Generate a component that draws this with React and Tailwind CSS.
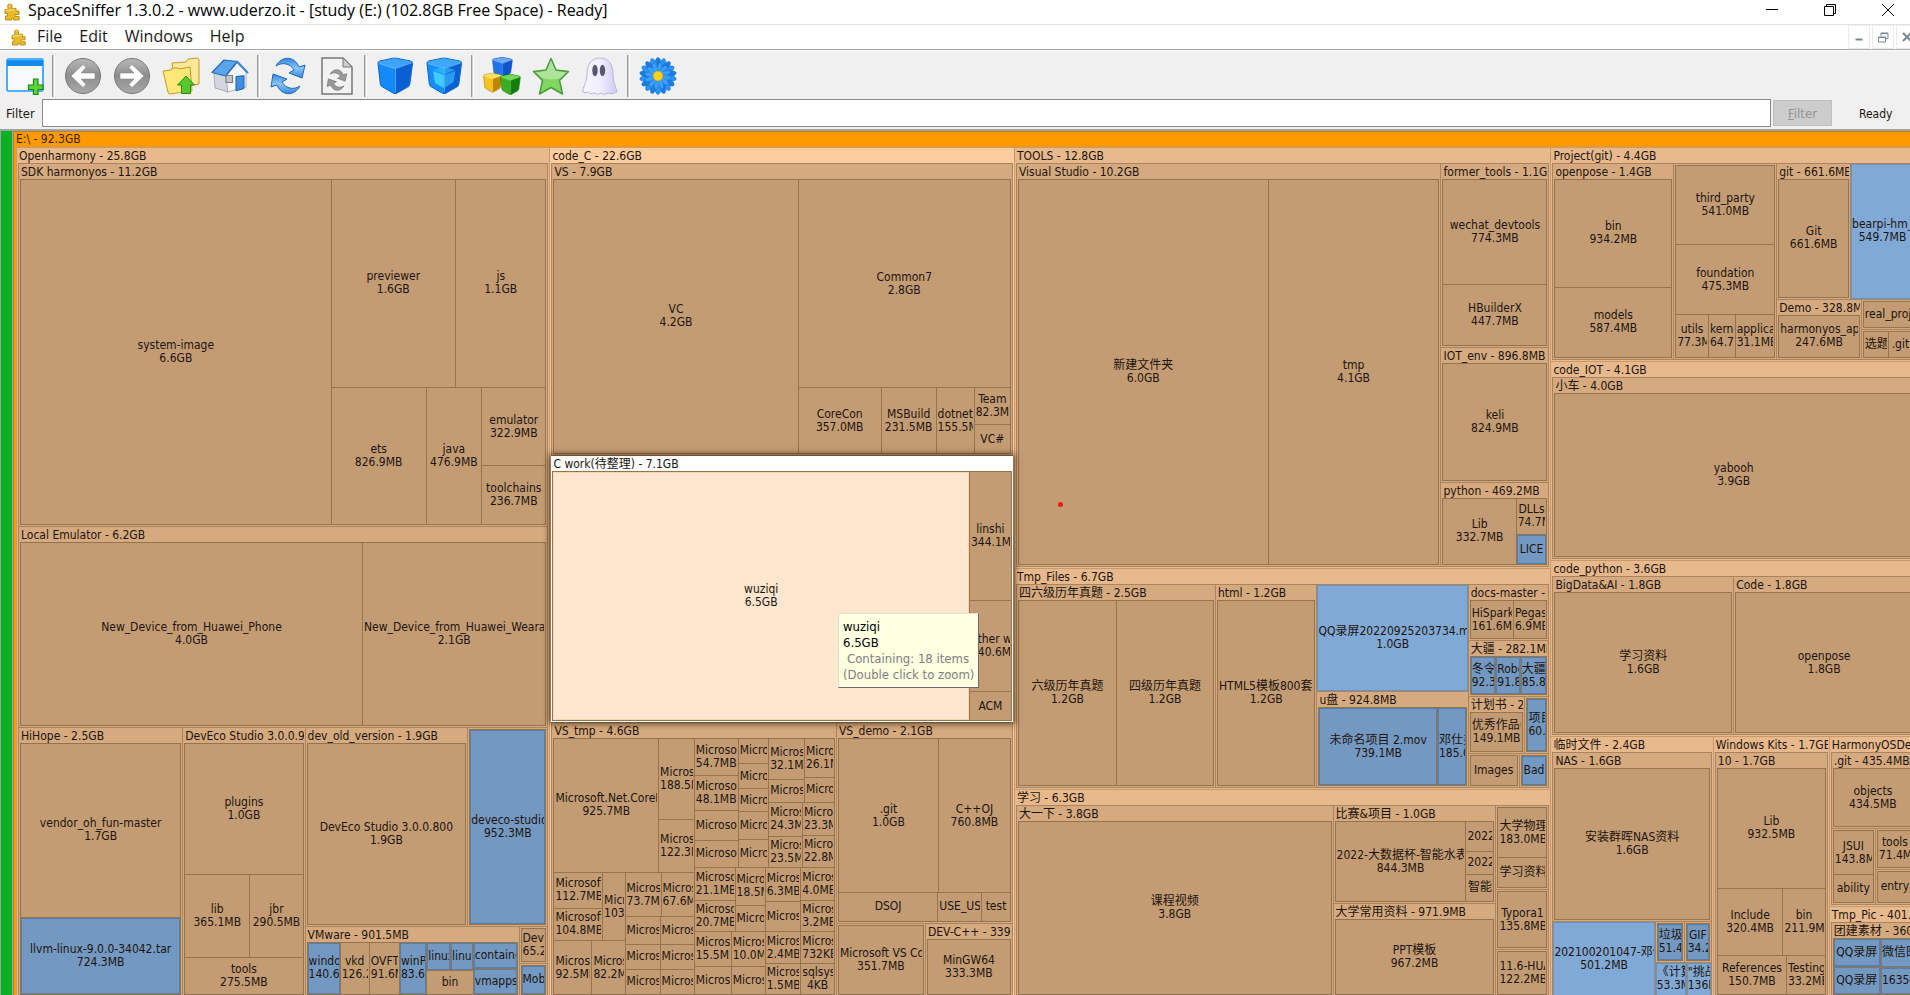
import React from "react";

// Treemap description. Every node carries its share of the parent's main axis.
const row = (w, ...kids) => ({ t: "row", w, kids });
const col = (w, ...kids) => ({ t: "col", w, kids });
const leaf = (w, name, size, tone = "tan") => ({ t: "leaf", w, name, size, tone });
const folder = (w, title, kid, look = "sub") => ({ t: "folder", w, title, kid, look });

const TONES = {
  tan: "bg-[#c49c74] border-transparent",
  blue: "bg-[#7399c3] border-[#587fa8]",
  sky: "bg-[#80a9d6] border-[#6a93c0]",
  hot: "bg-[#ffe6cf] border-[#ffd6b0]",
};

const LOOKS = {
  top: "bg-[#e8b98c]",
  lit: "bg-[#ffcc9f]",
  sub: "bg-[#d5aa7f]",
  focus: "relative z-10 -mx-px bg-white shadow-[0_0_6px_2px_rgba(60,35,10,0.75)]",
};

const BODIES = {
  top: "bg-[#a98460]",
  lit: "bg-[#a98460]",
  sub: "bg-[#94744f]",
  focus: "bg-[#94744f]",
};

const m = (w, name = "Microsof", size) => leaf(w, name, size);

const openharmony = folder(533, "Openharmony - 25.8GB",
  col(1,
    folder(363, "SDK harmonyos - 11.2GB",
      row(1,
        leaf(310, "system-image", "6.6GB"),
        col(214,
          row(208, leaf(124, "previewer", "1.6GB"), leaf(90, "js", "1.1GB")),
          row(137,
            leaf(95, "ets", "826.9MB"),
            leaf(55, "java", "476.9MB"),
            col(64, leaf(79, "emulator", "322.9MB"), leaf(58, "toolchains", "236.7MB")))))),
    folder(201, "Local Emulator - 6.2GB",
      row(1,
        leaf(342, "New_Device_from_Huawei_Phone", "4.0GB"),
        leaf(183, "New_Device_from_Huawei_Wearable", "2.1GB"))),
    row(269,
      folder(164, "HiHope - 2.5GB",
        col(1,
          leaf(173, "vendor_oh_fun-master", "1.7GB"),
          leaf(76, "llvm-linux-9.0.0-34042.tar", "724.3MB", "blue"))),
      folder(122, "DevEco Studio 3.0.0.993",
        col(1,
          leaf(132, "plugins", "1.0GB"),
          row(83, leaf(65, "lib", "365.1MB"), leaf(53, "jbr", "290.5MB")),
          leaf(36, "tools", "275.5MB"))),
      col(243,
        row(199,
          folder(163, "dev_old_version - 1.9GB", leaf(1, "DevEco Studio 3.0.0.800", "1.9GB")),
          folder(80, null, leaf(1, "deveco-studio", "952.3MB", "blue"))),
        row(70,
          folder(214, "VMware - 901.5MB",
            row(1,
              leaf(33, "windows", "140.6MB", "blue"),
              leaf(29, "vkd", "126.2MB"),
              leaf(30, "OVFT", "91.6MB"),
              leaf(27, "winPre", "83.6MB", "blue"),
              col(47,
                row(28, leaf(24, "linux", null, "blue"), leaf(23, "linux", null, "blue")),
                leaf(24, "bin")),
              col(44, leaf(26, "container", null, "blue"), leaf(26, "vmapps", null, "blue")))),
          col(28,
            folder(37, null, leaf(1, "DevE", "65.2M")),
            folder(33, null, leaf(1, "Mobi", null, "blue"))))))),
  "top");

const codeC = folder(464, "code_C - 22.6GB",
  col(1,
    folder(292, "VS - 7.9GB",
      row(1,
        leaf(244, "VC", "4.2GB"),
        col(212,
          leaf(209, "Common7", "2.8GB"),
          row(65,
            leaf(84, "CoreCon", "357.0MB"),
            leaf(55, "MSBuild", "231.5MB"),
            leaf(38, "dotnet", "155.5MB"),
            col(36, leaf(36, "Team", "82.3MB"), leaf(28, "VC#")))))),
    folder(267, "C work(待整理) - 7.1GB",
      row(1,
        leaf(415, "wuziqi", "6.5GB", "hot"),
        col(41, leaf(129, "linshi", "344.1MB"), leaf(90, "other w", "140.6MB"), leaf(28, "ACM"))),
      "focus"),
    row(274,
      folder(285, "VS_tmp - 4.6GB",
        row(1,
          col(140,
            row(134,
              leaf(105, "Microsoft.Net.CoreR", "925.7MB"),
              col(35, m(81, "Microso", "188.5MB"), m(53, "Microso", "122.3MB"))),
            row(122,
              col(71,
                row(69,
                  col(49, m(36, "Microsoft.", "112.7MB"), m(33, "Microsoft.", "104.8MB")),
                  m(22, "Micros", "103.0MB")),
                row(54, m(38, "Microso", "92.5MB"), m(33, "Microso", "82.2MB"))),
              col(69,
                row(45, m(36, "Microso", "73.7MB"), m(33, "Microso", "67.6MB")),
                row(27, m(35), m(34)),
                row(25, m(35), m(34)),
                row(25, m(35), m(34))))),
          col(140,
            row(129,
              col(44, m(37, "Microsof", "54.7MB"), m(35, "Microsof", "48.1MB"), m(30), m(27)),
              col(30, m(25), m(25), m(23), m(28), m(28)),
              col(66,
                row(64,
                  col(36, m(41, "Microso", "32.1MB"), m(23)),
                  col(30, m(39, "Microso", "26.1MB"), m(25))),
                row(65,
                  col(34, m(34, "Microso", "24.3MB"), m(31, "Microso", "23.5MB")),
                  col(32, m(33, "Microso", "23.3MB"), m(32, "Microso", "22.8MB"))))),
            row(127,
              col(71,
                row(64,
                  col(41, m(33, "Microsof", "21.1MB"), m(31, "Microsof", "20.7MB")),
                  col(30, m(38, "Microso", "18.5MB"), m(27))),
                row(62,
                  col(37, m(34, "Microso", "15.5MB"), m(28)),
                  col(34, m(34, "Microso", "10.0MB"), m(28)))),
              col(35, m(34, "Microso", "6.3MB"), m(30), m(31, "Microso", "2.4MB"), m(31, "Microso", "1.5MB")),
              col(33, m(33, "Microso", "4.0MB"), m(31, "Microso", "3.2MB"), m(31, "Microso", "732KB"), m(31, "sqlsysc", "4KB")))))),
      col(176,
        folder(202, "VS_demo - 2.1GB",
          col(1,
            row(155, leaf(99, ".git", "1.0GB"), leaf(71, "C++OJ", "760.8MB")),
            row(28, leaf(99, "DSOJ"), leaf(43, "USE_US"), leaf(28, "test")))),
        row(73,
          folder(89, null, leaf(1, "Microsoft VS Code", "351.7MB")),
          folder(87, "DEV-C++ - 339.1MB", leaf(1, "MinGW64", "333.3MB")))))),
  "lit");

const thirdColumn = col(536,
  folder(421, "TOOLS - 12.8GB",
    row(1,
      folder(424, "Visual Studio - 10.2GB",
        row(1, leaf(249, "新建文件夹", "6.0GB"), leaf(170, "tmp", "4.1GB"))),
      col(107,
        folder(184, "former_tools - 1.1GB",
          col(1, leaf(105, "wechat_devtools", "774.3MB"), leaf(60, "HBuilderX", "447.7MB"))),
        folder(135, "IOT_env - 896.8MB", leaf(1, "keli", "824.9MB")),
        folder(84, "python - 469.2MB",
          row(1,
            leaf(73, "Lib", "332.7MB"),
            col(30, leaf(36, "DLLs", "74.7MB"), leaf(29, "LICE", null, "blue")))))), "top"),
  folder(221, "Tmp_Files - 6.7GB",
    row(1,
      folder(199, "四六级历年真题 - 2.5GB",
        row(1, leaf(98, "六级历年真题", "1.2GB"), leaf(97, "四级历年真题", "1.2GB"))),
      folder(101, "html - 1.2GB", leaf(1, "HTML5模板800套-", "1.2GB")),
      col(151,
        leaf(107, "QQ录屏20220925203734.mp4", "1.0GB", "sky"),
        folder(96, "u盘 - 924.8MB",
          row(1, leaf(118, "未命名项目 2.mov", "739.1MB", "blue"), leaf(28, "邓仕尧", "185.0MB", "blue")))),
      col(80,
        folder(56, "docs-master - 282.3MB",
          row(1, leaf(43, "HiSpark", "161.6MB"), leaf(33, "Pegasus", "6.9MB"))),
        folder(56, "大疆 - 282.1MB",
          row(1,
            leaf(25, "冬令", "92.3MB", "blue"),
            leaf(24, "Robo", "91.8MB", "blue"),
            leaf(26, "大疆", "85.8MB", "blue"))),
        row(57,
          folder(56, "计划书 - 209MB", leaf(1, "优秀作品(", "149.1MB")),
          folder(23, null, leaf(1, "项目", "60.1MB", "blue"))),
        row(34,
          folder(50, null, leaf(1, "Images")),
          folder(29, null, leaf(1, "Bad", null, "blue"))))), "top"),
  folder(208, "学习 - 6.3GB",
    row(1,
      folder(316, "大一下 - 3.8GB", leaf(1, "课程视频", "3.8GB")),
      col(162,
        folder(97, "比赛&项目 - 1.0GB",
          row(1,
            leaf(130, "2022-大数据杯-智能水表", "844.3MB"),
            col(27, leaf(29, "2022"), leaf(22, "2022"), leaf(27, "智能")))),
        folder(92, "大学常用资料 - 971.9MB", leaf(1, "PPT模板", "967.2MB"))),
      col(52,
        folder(83, null, col(1, leaf(50, "大学物理", "183.0MB"), leaf(29, "学习资料"))),
        folder(60, null, leaf(1, "Typora1", "135.8MB")),
        folder(46, null, leaf(1, "11.6-HUA", "122.2MB")))), "top"));

const fourthColumn = col(365,
  folder(214, "Project(git) - 4.4GB",
    row(1,
      folder(121, "openpose - 1.4GB",
        col(1, leaf(108, "bin", "934.2MB"), leaf(70, "models", "587.4MB"))),
      folder(103, null,
        col(1,
          leaf(80, "third_party", "541.0MB"),
          leaf(70, "foundation", "475.3MB"),
          row(43,
            leaf(32, "utils", "77.3MB"),
            leaf(26, "kernel", "64.7MB"),
            leaf(39, "applicati", "31.1MB")))),
      col(138,
        row(136,
          folder(74, "git - 661.6MB", leaf(1, "Git", "661.6MB")),
          leaf(64, "bearpi-hm_nano", "549.7MB", "sky")),
        row(60,
          folder(85, "Demo - 328.8MB", leaf(1, "harmonyos_app", "247.6MB")),
          col(53,
            folder(30, null, leaf(1, "real_proje")),
            folder(30, null, row(1, leaf(25, "选题"), leaf(24, ".git"))))))), "top"),
  folder(199, "code_IOT - 4.1GB",
    folder(1, "小车 - 4.0GB", leaf(1, "yabooh", "3.9GB")), "top"),
  folder(176, "code_python - 3.6GB",
    row(1,
      folder(181, "BigData&AI - 1.8GB", leaf(1, "学习资料", "1.6GB")),
      folder(181, "Code - 1.8GB", leaf(1, "openpose", "1.8GB"))), "top"),
  row(262,
    folder(163, "临时文件 - 2.4GB",
      col(1,
        folder(169, "NAS - 1.6GB", leaf(1, "安装群晖NAS资料", "1.6GB")),
        row(75,
          leaf(103, "202100201047-邓仕尧", "501.2MB", "sky"),
          col(56,
            row(41,
              folder(29, null, leaf(1, "垃圾", "51.4MB", "blue")),
              folder(27, null, leaf(1, "GIF", "34.2MB", "blue"))),
            row(34,
              leaf(31, "《计算", "53.3MB", "sky"),
              leaf(25, "\"挑战", "136KB", "sky"))))), "top"),
    folder(116, "Windows Kits - 1.7GB",
      folder(1, "10 - 1.7GB",
        col(1,
          leaf(119, "Lib", "932.5MB"),
          row(67, leaf(64, "Include", "320.4MB"), leaf(41, "bin", "211.9MB")),
          row(38, leaf(67, "References", "150.7MB"), leaf(37, "Testing", "33.2MB")))), "top"),
    col(87,
      folder(170, "HarmonyOSDev - 700MB",
        col(1,
          folder(76, ".git - 435.4MB", leaf(1, "objects", "434.5MB")),
          row(75,
            folder(44, null, col(1, leaf(44, "JSUI", "143.8MB"), leaf(27, "ability"))),
            col(39,
              folder(40, null, leaf(1, "tools", "71.4MB")),
              folder(35, null, leaf(1, "entry"))))), "top"),
      folder(92, "Tmp_Pic - 401.2MB",
        folder(1, "团建素材 - 360.8MB",
          row(1,
            col(46, leaf(27, "QQ录屏", null, "blue"), leaf(27, "QQ录屏", null, "blue")),
            col(31, leaf(28, "微信图", null, "blue"), leaf(26, "163507", null, "blue")))), "top"))));

const DRIVE = row(1, openharmony, codeC, thirdColumn, fourthColumn);

function Tile({ node }) {
  if (node.t === "leaf") {
    return (
      <div className={`flex min-h-0 min-w-0 flex-col justify-center border ${TONES[node.tone]}`}>
        <div className="overflow-x-clip text-center whitespace-nowrap">
          <div>{node.name}</div>
          {node.size && <div>{node.size}</div>}
        </div>
      </div>
    );
  }
  if (node.t === "folder") {
    return (
      <div className={`flex min-h-0 min-w-0 flex-col p-px ${LOOKS[node.look]}`}>
        {node.title && (
          <div className="h-[14px] shrink-0 overflow-x-clip pl-px leading-[15px] whitespace-nowrap">{node.title}</div>
        )}
        <div className={`grid min-h-0 flex-1 grid-cols-1 grid-rows-1 p-px ${BODIES[node.look]}`}>
          <Tile node={node.kid} />
        </div>
      </div>
    );
  }
  const tracks = node.kids.map((kid) => `minmax(0, ${kid.w}fr)`).join(" ");
  const isColumn = node.t === "col";
  return (
    <div
      style={isColumn ? { gridTemplateRows: tracks } : { gridTemplateColumns: tracks }}
      className={`grid min-h-0 min-w-0 gap-px ${isColumn ? "grid-cols-1" : "grid-rows-1"}`}
    >
      {node.kids.map((kid, i) => <Tile key={i} node={kid} />)}
    </div>
  );
}

const Icon = ({ children, className = "size-[38px]" }) => (
  <svg viewBox="0 0 38 38" className={className} aria-hidden="true">{children}</svg>
);

const Puzzle = ({ className }) => (
  <svg viewBox="0 0 16 18" className={className} aria-hidden="true">
    <path d="M4 5Q2.800 1 6 1 9 1 8 4.500L7.600 6 12 5.200V8H15V11.500H11V13.500H15.200V17H9.500V15.200H7.500V17H1.500V13H3.500V10.500H1V6.800L4.300 6.500z" fill="#e8bb2a" stroke="#b58a14" strokeWidth=".9" strokeLinejoin="round" />
    <path d="M5.200 2.800Q6 1.800 7 2.300M2 7.600L11 6.800" stroke="#fbe78f" strokeWidth="1" fill="none" />
  </svg>
);

const SyncShape = ({ fill, stroke }) => (
  <g fill={fill} stroke={stroke} strokeWidth="1" strokeLinejoin="round">
    <path d="M7 9C12-1 25-2 30 10l6-2-3 13-13-5 5-3C21 6 13 5 7 9z" />
    <path d="M31 29C26 39 13 40 8 28l-6 2 2-13 14 5-5 3c4 7 12 8 18 4z" />
  </g>
);

const Cube = ({ x, y, s, top, left, right, line }) => (
  <g transform={`translate(${x} ${y}) scale(${s})`} strokeLinejoin="round">
    <path d="M1 6Q1 4 3 3.500L16 .8Q18 .5 20 .8L34 3.500Q36.500 4 36.300 6L33.500 27Q33.200 29 31.500 30L20.500 36.300Q18.500 37.500 16.500 36.300L5.500 30Q3.700 29 3.400 27z" fill={left} stroke={line} strokeWidth="1" />
    <path d="M1.500 5.500Q1.600 4.200 3 3.800L16 1.200Q18 .9 20 1.200L34 3.800Q35.600 4.200 35.800 5.200L21 10.500Q19 11.200 17 10.800z" fill={top} />
    <path d="M19 11.200L21 10.500 35.900 5.300 33.100 27Q32.900 28.500 31.300 29.600L20.300 36Q19.500 36.500 18.800 36.500z" fill={right} />
    <path d="M2 6.200L17 10.900Q19 11.400 21 10.600L35.500 5.600M19 11.300V35" fill="none" stroke="#fff" strokeOpacity=".35" strokeWidth=".9" />
  </g>
);

const RoundArrow = ({ flip }) => (
  <Icon>
    <g transform={flip ? "translate(38 0) scale(-1 1)" : undefined}>
      <circle cx="19" cy="19" r="17.500" fill="url(#disc)" stroke="#777" />
      <path d="M7 19L19 7.500l3 3-5 5.500h14v6H17l5 5.500-3 3z" fill="#fff" stroke="#8a8a8a" strokeWidth=".6" />
    </g>
  </Icon>
);

const toolGroups = [
  [["New view", (
    <Icon>
      <rect x="1" y="2" width="36" height="32" rx="1.500" fill="#f7f9ff" stroke="#1e9bf5" strokeWidth="1.600" />
      <path d="M1 3h36v6H1z" fill="#1287ee" />
      <path d="M1 2.500h36" stroke="#45b4ff" strokeWidth="1.500" />
      <path d="M27.500 22h4.500v6h5v4.500h-5v5h-4.500v-5h-5V28h5z" fill="#5ed33a" stroke="#168a12" strokeWidth="1.200" />
    </Icon>)]],
  [["Back", <RoundArrow />], ["Forward", <RoundArrow flip />],
    ["Parent folder", (
      <Icon>
        <path d="M10 6l14-1 2-3 9-1q2 0 2 2v24l-24 4z" fill="#fbe79a" stroke="#c79a2a" />
        <path d="M1 14l8-1 1-2h6l1 1 11-2 2 24-22 3q-2 0-2-2z" fill="#ffe878" stroke="#c79a2a" />
        <path d="M24 19l8.500 9h-4v8.500h-9V28h-4z" fill="#57c92f" stroke="#2c8d17" strokeLinejoin="round" />
      </Icon>)],
    ["Home", (
      <Icon>
        <path d="M3 16L16 18 17 35 4 31z" fill="#d3d5dc" stroke="#9b9ea8" strokeWidth=".8" />
        <path d="M15.500 18.500L26 5.500 35 15V30L16.500 35z" fill="#f6f7fa" stroke="#9b9ea8" strokeWidth=".8" />
        <path d="M1 15.500L13 3 26.500 4.500 14.500 19z" fill="#5aa5ea" stroke="#1f67b8" strokeWidth="1.200" strokeLinejoin="round" />
        <path d="M26 4.500L36.500 15.500" stroke="#3c86d4" strokeWidth="2" strokeLinecap="round" />
        <path d="M15 18.500h6.500v7H15z" fill="#c4c7ce" stroke="#7a7d86" strokeWidth="1.200" />
        <path d="M25 19.500l8-.8v12.800l-8 2.300z" fill="#3f8fe0" stroke="#1c5eae" />
      </Icon>)]],
  [["Refresh all", <Icon><SyncShape fill="url(#sync)" stroke="#2467b8" /></Icon>],
    ["Refresh view", (
      <Icon>
        <path d="M4 1h21l9 9v27H4z" fill="#f2f2f2" stroke="#777" strokeWidth="1.500" />
        <path d="M25 1v9h9z" fill="#ccc" stroke="#777" />
        <g transform="translate(8 12) scale(.58)"><SyncShape fill="#999" stroke="#666" /></g>
      </Icon>)]],
  [["Less detail", <Icon><Cube x={1} y={.5} s={.98} top="#3ea2ff" left="#148af8" right="#0a5fd2" line="#0a63cc" /></Icon>],
    ["More detail", (
      <Icon>
        <Cube x={1} y={.5} s={.98} top="#3ea8ff" left="#148df9" right="#0a5fd2" line="#0a63cc" />
        <path d="M8 14l11 4v13l-9-5z" fill="#4fe0ff" opacity=".75" />
        <path d="M19.500 18l11-4-2 11-9 6z" fill="#38b6fa" opacity=".7" />
        <path d="M8 13l11-3.500 11 3.500-10.500 4.500z" fill="#35c4ff" opacity=".6" />
      </Icon>)]],
  [["File types", (
    <Icon>
      <Cube x={9} y={0} s={.56} top="#6aabf8" left="#1f74ea" right="#0f54cc" line="#0d49ad" />
      <Cube x={0} y={16} s={.52} top="#ffe066" left="#f6c21e" right="#bd8500" line="#a87500" />
      <Cube x={17} y={17} s={.56} top="#74d850" left="#38ae22" right="#137c0b" line="#0f6f0a" />
    </Icon>)],
    ["Tags", (
      <Icon>
        <path d="M19 1.500L24 13l12.500 1.500-9 9L30.500 37 19 30.500 7.500 37l3-13.500-9-9L14 13z" fill="url(#star)" stroke="#4b9a3d" strokeWidth="1.500" strokeLinejoin="round" />
        <path d="M19 3.500l4.500 10.500L34 15.500l-5 5q-10 4-19 0l-6-5L14.500 14z" fill="#fff" opacity=".35" />
      </Icon>)],
    ["Ghost files", (
      <Icon>
        <path d="M19 1C10 1 6 8 6 17 6 27 1 30 2 35q2 2 5 0 3 3 6 1 4 3 7 0 4 3 7 0 4 2 9-1c-1-5-4-9-4-18C32 8 28 1 19 1z" fill="url(#ghost)" stroke="#b9b5dc" strokeWidth="1" />
        <ellipse cx="14" cy="13.500" rx="2.700" ry="5.800" fill="#55586e" />
        <ellipse cx="21.500" cy="13.500" rx="2.700" ry="5.800" fill="#55586e" />
      </Icon>)]],
  [["Donate", (
    <Icon>
      {Array.from({ length: 18 }, (_, i) => (
        <ellipse key={i} cx="19" cy="8.500" rx="3.200" ry="8" fill={i % 2 ? "#2b93f2" : "#1a7de2"} stroke="#0f62c4" strokeWidth=".4" transform={`rotate(${i * 20} 19 19)`} />
      ))}
      {Array.from({ length: 12 }, (_, i) => (
        <ellipse key={i} cx="19" cy="11.500" rx="2.400" ry="6" fill="#3aa0f8" stroke="#1268c8" strokeWidth=".4" transform={`rotate(${i * 30 + 10} 19 19)`} />
      ))}
      <circle cx="19" cy="19" r="4.800" fill="#fbd21c" stroke="#e0a800" strokeWidth=".6" />
    </Icon>)]],
];

const Gradients = () => (
  <svg className="absolute size-0" aria-hidden="true">
    <defs>
      <linearGradient id="disc" x1="0" y1="0" x2="0" y2="1">
        <stop offset="0" stopColor="#b8b8b8" /><stop offset=".5" stopColor="#8d8d8d" /><stop offset="1" stopColor="#a9a9a9" />
      </linearGradient>
      <linearGradient id="sync" x1="0" y1="0" x2="0" y2="1">
        <stop offset="0" stopColor="#2f86dc" /><stop offset=".5" stopColor="#8cc4fa" /><stop offset="1" stopColor="#2f86dc" />
      </linearGradient>
      <linearGradient id="star" x1="0" y1="0" x2="0" y2="1">
        <stop offset="0" stopColor="#8bcf74" /><stop offset="1" stopColor="#7cdb55" />
      </linearGradient>
      <linearGradient id="ghost" x1="0" y1="0" x2="1" y2="0">
        <stop offset="0" stopColor="#f6f5ff" /><stop offset=".5" stopColor="#f0eeff" /><stop offset="1" stopColor="#cfcbee" />
      </linearGradient>
    </defs>
  </svg>
);

export default function App() {
  return (
    <div className="flex h-screen flex-col overflow-hidden bg-[#f0f0f0] font-['DejaVu_Sans_Condensed','Noto_Sans_CJK_SC',sans-serif] text-[12px] leading-[13px] text-[#1c140c]">
      <Gradients />
      <header className="flex h-6 shrink-0 items-center bg-white font-['Open_Sans',sans-serif] text-black">
        <Puzzle className="ml-1 h-[18px] w-4" />
        <h1 className="ml-2 flex-1 pb-1 text-[16px] leading-5 whitespace-nowrap">
          SpaceSniffer 1.3.0.2 - www.uderzo.it - [study (E:) (102.8GB Free Space) - Ready]
        </h1>
        <div className="flex items-center gap-[46px] pr-4 pb-1">
          <button aria-label="Minimize"><svg viewBox="0 0 12 12" className="size-3" aria-hidden="true"><path d="M0 5.500h12" stroke="#000" /></svg></button>
          <button aria-label="Restore"><svg viewBox="0 0 12 12" className="size-3" fill="none" stroke="#000" aria-hidden="true"><path d="M.5 2.500h9v9h-9zM2.500 2.500v-2h9v9h-2" /></svg></button>
          <button aria-label="Close"><svg viewBox="0 0 12 12" className="size-3" stroke="#000" aria-hidden="true"><path d="M0 0l12 12M12 0L0 12" /></svg></button>
        </div>
      </header>

      <nav className="flex h-[26px] shrink-0 items-center border-t border-b border-t-[#e3e3e3] border-b-[#a5a5a5] bg-white font-['Open_Sans',sans-serif] text-[16px] text-[#1a1a1a]">
        <Puzzle className="ml-[11px] h-[17px] w-[15px]" />
        <div className="ml-[11px] flex flex-1 items-center gap-[17px] pb-0.5">
          {["File", "Edit", "Windows", "Help"].map((name) => (
            <button key={name} className="leading-5">{name}</button>
          ))}
        </div>
        <div className="-mr-2 flex h-full gap-0.5">
          <button aria-label="Minimize view" className="flex w-[22px] items-center justify-center border border-[#ececec]"><svg viewBox="0 0 10 10" className="size-[10px]" aria-hidden="true"><path d="M1.500 7.500h7" stroke="#7b8794" strokeWidth="2" /></svg></button>
          <button aria-label="Restore view" className="flex w-[22px] items-center justify-center border border-[#ececec]"><svg viewBox="0 0 11 11" className="size-[11px]" fill="none" stroke="#7b8794" aria-hidden="true"><path d="M.5 5h7v5h-7zM.5 5.500h7M3 4V1h7v5.500H8M3 1.500h7" /></svg></button>
          <button aria-label="Close view" className="flex w-[22px] items-center justify-center border border-[#ececec]"><svg viewBox="0 0 10 10" className="size-[10px]" stroke="#7b8794" strokeWidth="2" aria-hidden="true"><path d="M1 1l8 8M9 1L1 9" /></svg></button>
        </div>
      </nav>

      <div role="toolbar" aria-label="Tools" className="flex h-[49px] shrink-0 items-center border-t border-white pt-0.5">
        {toolGroups.map((group, g) => (
          <React.Fragment key={g}>
            {g > 0 && <div className="mx-[3px] h-[42px] w-[3px] border-x border-l-[#9a9a9a] border-r-white bg-[#d0d0d0]" />}
            {group.map(([name, icon]) => (
              <button key={name} aria-label={name} className="flex h-10 w-[49px] items-center justify-center">{icon}</button>
            ))}
          </React.Fragment>
        ))}
      </div>

      <form className="flex h-[30px] shrink-0 items-start text-[13px]" onSubmit={(e) => e.preventDefault()}>
        <label htmlFor="filter" className="w-[42px] pl-1.5 leading-[30px]">Filter</label>
        <input id="filter" className="h-7 min-w-0 flex-1 border border-[#8a8a8a] bg-white px-1 outline-none" />
        <button disabled className="mt-px ml-[2px] h-[26px] w-[59px] border border-[#bfbfbf] bg-[#cccccc] text-[#939393]">
          <span className="underline">F</span>ilter
        </button>
        <output className="w-[78px] pl-[27px] text-[12px] leading-[30px]">Ready</output>
      </form>

      <main className="relative flex min-h-0 flex-1 border-t-2 border-[#a3a3a3]">
        <div className="flex h-[calc(100%+7px)] w-[calc(100%+10px)] shrink-0">
          <div className="w-[13px] shrink-0 border-x border-[#a3a3a3] bg-[#06b025]" />
          <div className="flex min-w-0 flex-1 flex-col border border-[#b8802a] bg-[#ff9900] px-0.5 pb-0.5">
            <div className="h-[15px] shrink-0 leading-[15px] text-[#3a2400]">E:\ - 92.3GB</div>
            <div className="grid min-h-0 flex-1 grid-cols-1 grid-rows-1 bg-[#c69a6c] p-px">
              <Tile node={DRIVE} />
            </div>
          </div>
        </div>
        <div className="absolute top-[371px] left-[1058px] size-[5px] rounded-full bg-[#ee1c1c]" />
        <div role="tooltip" className="absolute top-[482px] left-[838px] z-20 border border-t-[#e3e3d0] border-r-[#6b6b6b] border-b-[#6b6b6b] border-l-[#e3e3d0] bg-[#ffffe1] pt-[5px] pr-1 pb-1 pl-1 text-[13px] leading-4 whitespace-nowrap text-black">
          <div>wuziqi</div>
          <div>6.5GB</div>
          <div className="pl-1 text-[#808080]">Containing: 18 items</div>
          <div className="text-[#808080]">(Double click to zoom)</div>
        </div>
      </main>
    </div>
  );
}
